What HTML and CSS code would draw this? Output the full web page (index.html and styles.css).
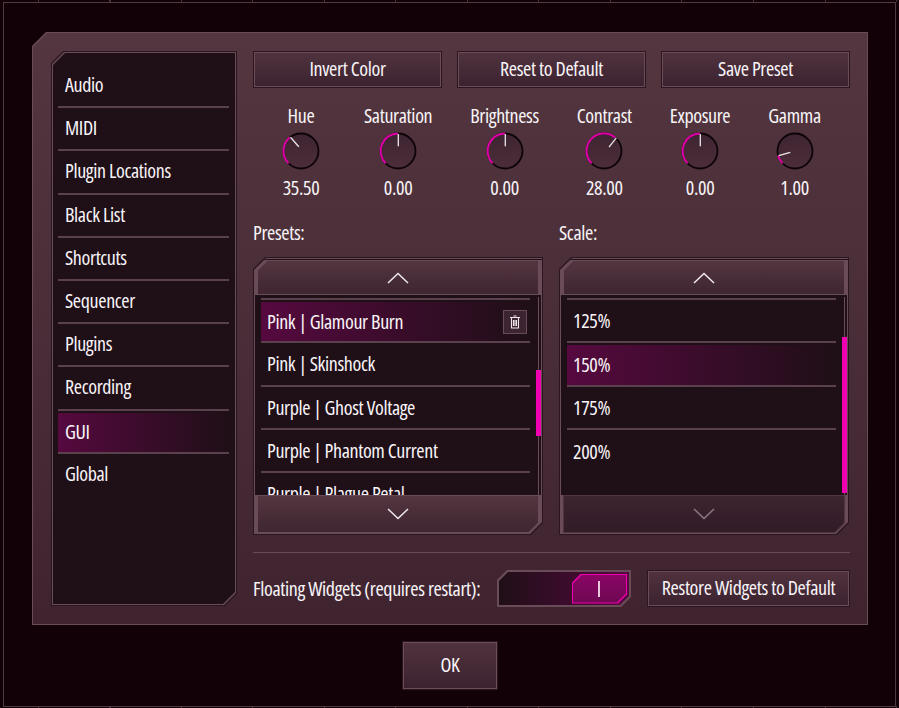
FILE: index.html
```html
<!DOCTYPE html>
<html lang="en">
<head>
    <meta charset="UTF-8">
    <title>Settings</title>
    <link rel="stylesheet" href="styles.css">
</head>
<body>
    <div class="screen">
        <div class="dialog">
            <div class="dialog-inner">
                <div class="sidebar">
                    <div class="sidebar-inner">
                        <div class="sidebar-list">
                            <div class="nav-item">Audio</div>
                            <div class="nav-item">MIDI</div>
                            <div class="nav-item">Plugin Locations</div>
                            <div class="nav-item">Black List</div>
                            <div class="nav-item">Shortcuts</div>
                            <div class="nav-item">Sequencer</div>
                            <div class="nav-item">Plugins</div>
                            <div class="nav-item">Recording</div>
                            <div class="nav-item active">GUI</div>
                            <div class="nav-item last">Global</div>
                        </div>
                    </div>
                </div>
                <div class="main">
                    <div class="actions">
                        <div class="btn"><span>Invert Color</span></div>
                        <div class="btn"><span>Reset to Default</span></div>
                        <div class="btn"><span>Save Preset</span></div>
                    </div>

                    <div class="knobs">
                        <div class="knob knob-first">
                            <div class="knob-label">Hue</div>
                            <svg width="40" height="40" viewBox="0 0 40 40">
                                <defs><linearGradient id="dial-fill" x1="0" y1="0" x2="0" y2="1"><stop offset="0" stop-color="#3e2431"/><stop offset="1" stop-color="#4c2e3a"/></linearGradient></defs>
                                <circle class="dial" cx="20" cy="20" r="17.500"/><path class="arc" d="M7.63 32.37A17.500 17.500 0 0 1 8.75 6.59"/><line class="tick" x1="9.500" y1="6.200" x2="17.800" y2="15.800"/>
                            </svg>
                            <div class="knob-value">35.50</div>
                        </div>
                        <div class="knob">
                            <div class="knob-label">Saturation</div>
                            <svg width="40" height="40" viewBox="0 0 40 40"><circle class="dial" cx="20" cy="20" r="17.500"/><path class="arc" d="M7.63 32.37A17.500 17.500 0 0 1 20 2.500"/><line class="tick" x1="20.300" y1="3" x2="20.300" y2="15.200"/></svg>
                            <div class="knob-value">0.00</div>
                        </div>
                        <div class="knob">
                            <div class="knob-label">Brightness</div>
                            <svg width="40" height="40" viewBox="0 0 40 40"><circle class="dial" cx="20" cy="20" r="17.500"/><path class="arc" d="M7.63 32.37A17.500 17.500 0 0 1 20 2.500"/><line class="tick" x1="20.300" y1="3" x2="20.300" y2="15.200"/></svg>
                            <div class="knob-value">0.00</div>
                        </div>
                        <div class="knob">
                            <div class="knob-label">Contrast</div>
                            <svg width="40" height="40" viewBox="0 0 40 40"><circle class="dial" cx="20" cy="20" r="17.500"/><path class="arc" d="M7.63 32.37A17.500 17.500 0 0 1 31.25 6.59"/><line class="tick" x1="32.300" y1="6.800" x2="25" y2="16.200"/></svg>
                            <div class="knob-value">28.00</div>
                        </div>
                        <div class="knob">
                            <div class="knob-label">Exposure</div>
                            <svg width="40" height="40" viewBox="0 0 40 40"><circle class="dial" cx="20" cy="20" r="17.500"/><path class="arc" d="M7.63 32.37A17.500 17.500 0 0 1 20 2.500"/><line class="tick" x1="20.300" y1="3" x2="20.300" y2="15.200"/></svg>
                            <div class="knob-value">0.00</div>
                        </div>
                        <div class="knob">
                            <div class="knob-label">Gamma</div>
                            <svg width="40" height="40" viewBox="0 0 40 40"><circle class="dial" cx="20" cy="20" r="17.500"/><path class="arc" d="M7.63 32.37A17.500 17.500 0 0 1 3.150 24.730"/><line class="tick" x1="3.600" y1="24.600" x2="15.300" y2="21.300"/></svg>
                            <div class="knob-value">1.00</div>
                        </div>
                    </div>

                    <div class="lists">
                        <div class="list-col">
                            <div class="list-title">Presets:</div>
                            <div class="listbox">
                                <div class="listbox-inner">
                                    <div class="arrow-btn up"><svg width="22" height="12" viewBox="0 0 22 12"><path d="M1 11 11 1.500 21 11"/></svg></div>
                                    <div class="list-body">
                                        <div class="rows">
                                            <div class="row selected"><span>Pink | Glamour Burn</span>
                                                <div class="trash"><svg width="12" height="14" viewBox="0 0 12 14"><path d="M4.500 1h3M1 2.500h10M2.500 3v10h7V3M4.500 5v6M7.500 5v6M6 5v6"/></svg></div>
                                            </div>
                                            <div class="row">Pink | Skinshock</div>
                                            <div class="row">Purple | Ghost Voltage</div>
                                            <div class="row">Purple | Phantom Current</div>
                                            <div class="row">Purple | Plague Petal</div>
                                        </div>
                                        <div class="scrollbar"><div class="track"></div><div class="thumb t1"></div></div>
                                    </div>
                                    <div class="arrow-btn down"><svg width="22" height="12" viewBox="0 0 22 12"><path d="M1 1 11 10.500 21 1"/></svg></div>
                                </div>
                            </div>
                        </div>
                        <div class="list-col">
                            <div class="list-title">Scale:</div>
                            <div class="listbox">
                                <div class="listbox-inner">
                                    <div class="arrow-btn up"><svg width="22" height="12" viewBox="0 0 22 12"><path d="M1 11 11 1.500 21 11"/></svg></div>
                                    <div class="list-body">
                                        <div class="rows">
                                            <div class="row">125%</div>
                                            <div class="row selected">150%</div>
                                            <div class="row">175%</div>
                                            <div class="row plain">200%</div>
                                        </div>
                                        <div class="scrollbar"><div class="track"></div><div class="thumb t2"></div></div>
                                    </div>
                                    <div class="arrow-btn down disabled"><svg width="22" height="12" viewBox="0 0 22 12"><path d="M1 1 11 10.500 21 1"/></svg></div>
                                </div>
                            </div>
                        </div>
                    </div>

                    <div class="widgets">
                        <div class="widgets-label">Floating Widgets (requires restart):</div>
                        <div class="toggle">
                            <div class="toggle-inner">
                                <div class="toggle-thumb"><div class="toggle-thumb-inner"><i></i></div></div>
                            </div>
                        </div>
                        <div class="btn restore"><span>Restore Widgets to Default</span></div>
                    </div>
                </div>
            </div>
        </div>
        <div class="footer">
            <div class="btn ok"><span>OK</span></div>
        </div>
    </div>
</body>
</html>
```

FILE: styles.css
```css
* { margin: 0; padding: 0; box-sizing: border-box; }
html, body { width: 899px; height: 708px; overflow: hidden; }
body {
    color: #f8f4f7;
    font-family: "Open Sans", "Liberation Sans", sans-serif;
    font-stretch: 75%;
    font-size: 20px;
    font-weight: 500;
    letter-spacing: -0.35px;
    /* ruler ticks along the top and bottom edge */
    background:
        repeating-linear-gradient(90deg, #4a3340 0 1px, transparent 1px 71.500px) 38px 0 / 100% 2px no-repeat,
        repeating-linear-gradient(90deg, #4a3340 0 1px, transparent 1px 71.500px) 38px 100% / 100% 2px no-repeat,
        #130108;
}

.screen {
    height: 705px;
    margin: 2px 3px 0;
    border: 1px solid #513845;
    padding: 29px 27px 0 28px;
}

/* cut corners are nested clip-paths, the outer one being the border colour */
.dialog {
    height: 593px;
    background: #6a4c59;
    padding: 1px;
    clip-path: polygon(14px 0, 100% 0, 100% 100%, 0 100%, 0 14px);
}
.dialog-inner {
    height: 100%;
    display: flex;
    gap: 16px;
    padding: 18px 17px 18px 18px;
    background: linear-gradient(#53363f, #3f2430);
    clip-path: polygon(14px 0, 100% 0, 100% 100%, 0 100%, 0 14px);
}

.sidebar {
    width: 186px;
    flex: none;
    background: #2b1620;
    padding: 1px;
    clip-path: polygon(12px 0, 100% 0, 100% calc(100% - 12px), calc(100% - 12px) 100%, 0 100%, 0 12px);
}
.sidebar-inner {
    height: 100%;
    background: #6a4c59;
    padding: 1px;
    clip-path: polygon(12px 0, 100% 0, 100% calc(100% - 12px), calc(100% - 12px) 100%, 0 100%, 0 12px);
}
.sidebar-list {
    height: 100%;
    padding: 12px 6px 0 5px;
    background: #1f0f17;
    clip-path: polygon(12px 0, 100% 0, 100% calc(100% - 12px), calc(100% - 12px) 100%, 0 100%, 0 12px);
}
.nav-item {
    height: 43.200px;
    line-height: 40px;
    padding-left: 7px;
    border-bottom: 2px solid #5a414d;
}
.nav-item.active {
    border-top: 2px solid #1f0f17;
    line-height: 38px;
    background: linear-gradient(90deg, #56093f, #1f0f17);
}
.nav-item.last { border-bottom: 0; }

.main { flex: 1; display: flex; flex-direction: column; min-width: 0; }

.actions { display: flex; justify-content: space-between; }
.actions .btn { width: 189px; }

.btn {
    height: 37px;
    padding: 1px;
    background: #2b1620;
    text-align: center;
    white-space: nowrap;
}
.btn span {
    display: block;
    height: 100%;
    line-height: 31px;
    border: 1px solid #6a4c59;
    background: linear-gradient(#4f323d, #3c2230);
}

.knobs { display: flex; gap: 38px; padding-left: 23px; margin-top: 16px; }
.knob { display: flex; flex-direction: column; align-items: center; }
.knob-first { width: 50px; }
.knob-label { line-height: 24px; white-space: nowrap; }
.knob svg { display: block; margin-top: 3px; }
.knob-value { line-height: 24px; margin-top: 5px; }
.dial { fill: url(#dial-fill); stroke: #0d0308; stroke-width: 1.800px; }
.arc { fill: none; stroke: #e000a8; stroke-width: 2px; }
.tick { stroke: #ece5ea; stroke-width: 1.300px; }

.lists { display: flex; gap: 16px; margin-top: 21px; }
.list-col { width: 290px; }
.list-title { line-height: 24px; }

.listbox {
    height: 278px;
    margin-top: 12px;
    background: #2b1620;
    padding: 1px;
    clip-path: polygon(12px 0, 100% 0, 100% calc(100% - 12px), calc(100% - 12px) 100%, 0 100%, 0 12px);
}
.listbox-inner {
    height: 100%;
    display: flex;
    flex-direction: column;
    background: #6a4c59;
    padding: 1px;
    clip-path: polygon(12px 0, 100% 0, 100% calc(100% - 12px), calc(100% - 12px) 100%, 0 100%, 0 12px);
}
.listbox-inner::before { content: ""; flex: none; height: 1px; margin: 0 -1px; background: #1f0f17; }
.arrow-btn {
    flex: none;
    display: flex;
    justify-content: center;
    align-items: center;
    margin: 0 2px;
    border: 1px solid #6a4c59;
    background-origin: border-box;
}
.arrow-btn.up {
    height: 35px;
    background-image: linear-gradient(135deg, #6a4c59 0 8.100px, transparent 8.100px), linear-gradient(#533640, #3e2530);
    clip-path: polygon(10px 0, 100% 0, 100% 100%, 0 100%, 0 10px);
}
.arrow-btn.down {
    height: 38px;
    background-image: linear-gradient(315deg, #6a4c59 0 8.100px, transparent 8.100px), linear-gradient(#533640, #3e2530);
    clip-path: polygon(0 0, 100% 0, 100% calc(100% - 10px), calc(100% - 10px) 100%, 0 100%);
}
.arrow-btn path { fill: none; stroke: #f0e8ee; stroke-width: 1.500px; }
.arrow-btn.disabled {
    background-image: linear-gradient(315deg, #50353f 0 8.100px, transparent 8.100px), linear-gradient(#3e2530, #301b26);
    border-color: #50353f;
}
.arrow-btn.disabled path { stroke: #8e7a86; }

.list-body {
    flex: 1;
    min-height: 0;
    display: flex;
    overflow: hidden;
    background: #1f0f17;
}
.rows { flex: 1; min-width: 0; margin: 3px 6px 0 6px; border-top: 2px solid #5a414d; }
.row {
    display: flex;
    justify-content: space-between;
    align-items: center;
    height: 43.250px;
    padding: 0 3px 0 6px;
    border-bottom: 2px solid #5a414d;
    white-space: nowrap;
}
.row.plain { border-bottom: 0; }
.row.selected {
    border-top: 2px solid #1f0f17;
    background: linear-gradient(90deg, #56093f, #1f0f17);
}
.trash {
    width: 24px;
    height: 24px;
    display: flex;
    justify-content: center;
    align-items: center;
    background: #3c2530;
    border: 1px solid #6a4c59;
}
.trash path { fill: none; stroke: #efe6ec; stroke-width: 1.100px; }

.scrollbar { width: 5px; position: relative; flex: none; }
.track { position: absolute; top: 2px; left: 2px; width: 1px; height: 100%; background: #6a4c59; }
.thumb { position: absolute; left: 0; width: 5px; background: #f000b0; }
.thumb.t1 { top: 75px; height: 66px; }
.thumb.t2 { top: 42px; height: 156px; }

.widgets {
    display: flex;
    align-items: center;
    height: 56px;
    margin-top: 17px;
    border-top: 1px solid #664b57;
    padding-top: 17px;
}
.widgets-label { width: 244px; white-space: nowrap; }
.toggle {
    width: 134px;
    height: 37px;
    background: #6a4c59;
    padding: 2px;
    clip-path: polygon(10px 0, 100% 0, 100% calc(100% - 10px), calc(100% - 10px) 100%, 0 100%, 0 10px);
}
.toggle-inner {
    height: 100%;
    display: flex;
    justify-content: flex-end;
    align-items: center;
    padding-right: 2px;
    background: linear-gradient(90deg, #1f0f17, #56093f);
    clip-path: polygon(9px 0, 100% 0, 100% calc(100% - 9px), calc(100% - 9px) 100%, 0 100%, 0 9px);
}
.toggle-thumb {
    width: 55px;
    height: 30px;
    background: #f000b0;
    padding: 1px;
    clip-path: polygon(9px 0, 100% 0, 100% calc(100% - 9px), calc(100% - 9px) 100%, 0 100%, 0 9px);
}
.toggle-thumb-inner {
    height: 100%;
    display: flex;
    justify-content: center;
    align-items: center;
    padding-right: 2px;
    background: linear-gradient(#8a0565, #6e0853);
    clip-path: polygon(9px 0, 100% 0, 100% calc(100% - 9px), calc(100% - 9px) 100%, 0 100%, 0 9px);
}
.toggle-thumb-inner i { display: block; width: 2px; height: 16px; background: #e8c8dc; }
.restore { width: 203px; margin-left: 16px; }

.footer { display: flex; justify-content: center; margin-top: 16px; }
.ok { width: 96px; height: 49px; }
.ok span { line-height: 43px; }
```
